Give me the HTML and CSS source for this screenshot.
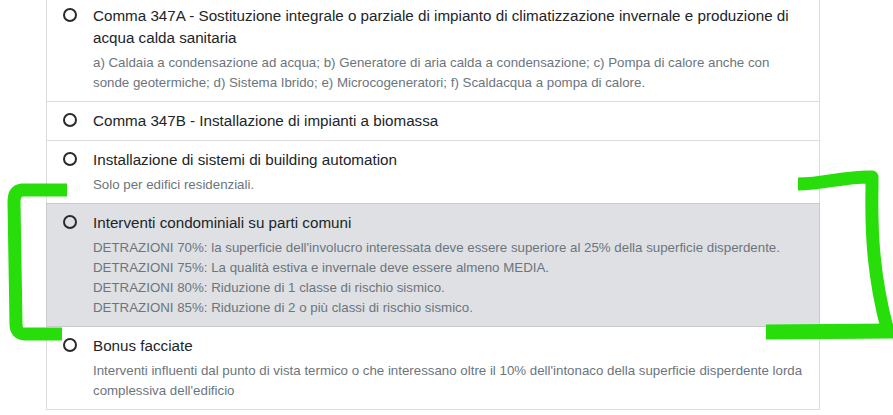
FILE: index.html
```html
<!DOCTYPE html>
<html lang="it">
<head>
    <meta charset="UTF-8">
    <meta name="viewport" content="width=device-width, initial-scale=1.0">
    <title>Interventi</title>
    <link rel="stylesheet" href="styles.css">
</head>
<body>
    <div class="page">
        <ul class="option-list">
            <li class="option">
                <span class="radio"></span>
                <div class="option-body">
                    <div class="option-title">Comma 347A - Sostituzione integrale o parziale di impianto di climatizzazione invernale e produzione di acqua calda sanitaria</div>
                    <div class="option-desc">a) Caldaia a condensazione ad acqua; b) Generatore di aria calda a condensazione; c) Pompa di calore anche con sonde geotermiche; d) Sistema Ibrido; e) Microcogeneratori; f) Scaldacqua a pompa di calore.</div>
                </div>
            </li>
            <li class="option">
                <span class="radio"></span>
                <div class="option-body">
                    <div class="option-title">Comma 347B - Installazione di impianti a biomassa</div>
                </div>
            </li>
            <li class="option">
                <span class="radio"></span>
                <div class="option-body">
                    <div class="option-title">Installazione di sistemi di building automation</div>
                    <div class="option-desc">Solo per edifici residenziali.</div>
                </div>
            </li>
            <li class="option option-hover">
                <span class="radio"></span>
                <div class="option-body">
                    <div class="option-title">Interventi condominiali su parti comuni</div>
                    <div class="option-desc">
                        DETRAZIONI 70%: la superficie dell'involucro interessata deve essere superiore al 25% della superficie disperdente.<br>
                        DETRAZIONI 75%: La qualità estiva e invernale deve essere almeno MEDIA.<br>
                        DETRAZIONI 80%: Riduzione di 1 classe di rischio sismico.<br>
                        DETRAZIONI 85%: Riduzione di 2 o più classi di rischio sismico.
                    </div>
                </div>
            </li>
            <li class="option">
                <span class="radio"></span>
                <div class="option-body">
                    <div class="option-title">Bonus facciate</div>
                    <div class="option-desc">Interventi influenti dal punto di vista termico o che interessano oltre il 10% dell'intonaco della superficie disperdente lorda complessiva dell'edificio</div>
                </div>
            </li>
        </ul>

        <!-- annotazione a mano sopra lo screenshot -->
        <svg class="marker" width="893" height="415" viewBox="0 0 893 415">
            <path d="M67 194 L22 194 Q14 195 14 206 L16 328 Q16 338 25 338 L62 338" />
            <path d="M798 188 C825 188 845 180 872 181 L872 192 C871 240 874 282 887 332" />
            <path class="thick" d="M766 336 L893 335" />
        </svg>
    </div>
</body>
</html>
```

FILE: styles.css
```css
body {
    margin: 0;
    background: #ffffff;
    font-family: "Liberation Sans", Arial, sans-serif;
    color: #212529;
    overflow: hidden;
}

.page {
    position: relative;
    width: 893px;
    height: 415px;
}

.option-list {
    list-style: none;
    margin: -4px 0 0 46px;
    padding: 0;
    width: 772px;
    border: 1px solid #dcdcdc;
}

.option {
    display: flex;
    align-items: flex-start;
    gap: 16px;
    padding: 8px 16px 8px 16px;
    border-top: 1px solid #dcdcdc;
}

.option:first-child {
    border-top: none;
}

.option-hover {
    background-color: #dee0e4;
    border-top-color: #c9cbce;
    margin: 0 -1px;
    border-left: 1px solid #c9cbce;
    border-right: 1px solid #c9cbce;
}

.option-hover + .option {
    border-top-color: #c9cbce;
}

.radio {
    flex: none;
    width: 10px;
    height: 10px;
    margin-top: 3px;
    border: 2px solid #2a2a2a;
    border-radius: 50%;
}

.option-body {
    flex: 1;
}

.option-title {
    font-size: 15.2px;
    line-height: 22px;
}

.option-desc {
    margin-top: 4px;
    font-size: 13.3px;
    line-height: 20px;
    color: #6c757d;
}

.marker {
    position: absolute;
    left: 0;
    top: 0;
    pointer-events: none;
}

.marker path {
    fill: none;
    stroke: #27dd0a;
    stroke-width: 13;
    stroke-linejoin: round;
}

.marker .thick {
    stroke-width: 15;
}
```
